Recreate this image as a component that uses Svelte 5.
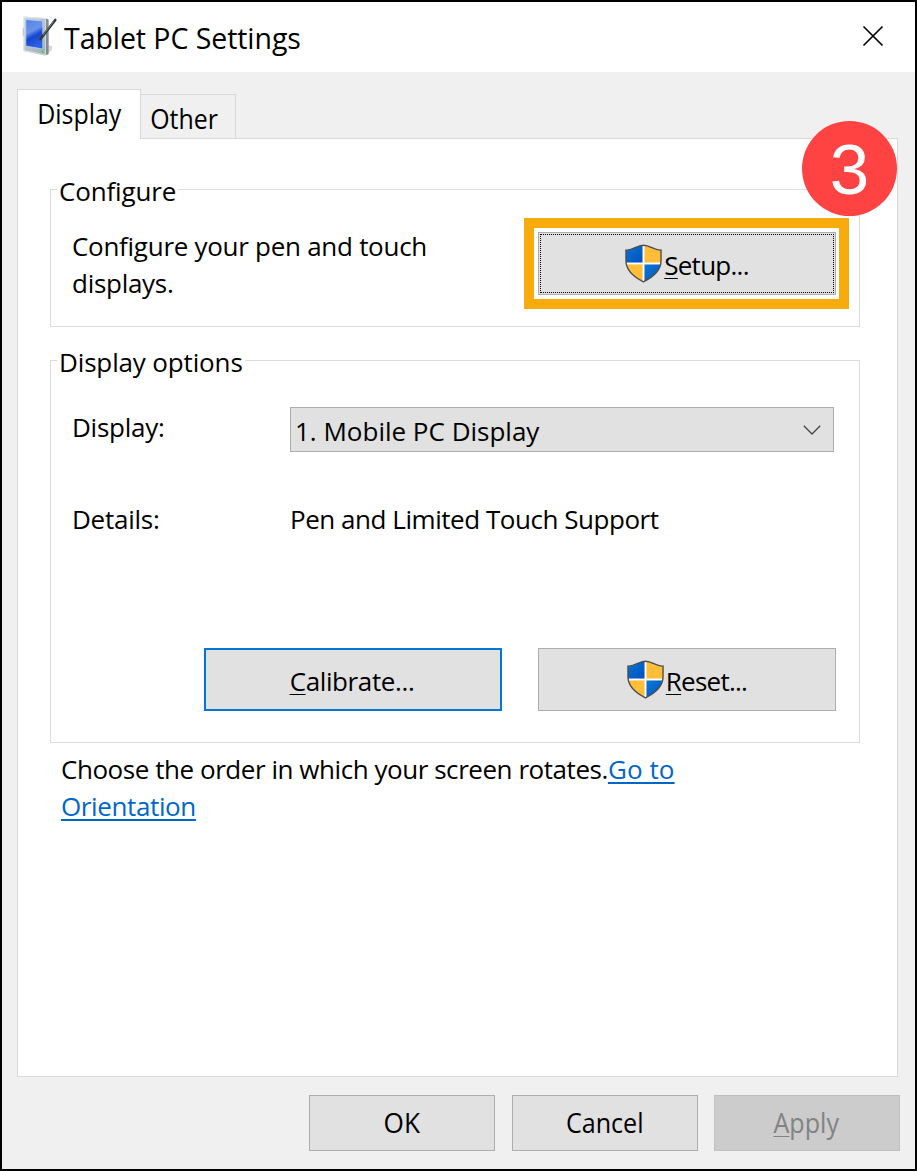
<script lang="ts">
  let activeTab = $state('Display')

  const tabs = ['Display', 'Other']
</script>

{#snippet shield()}
  <svg class="shield" width="37" height="39" viewBox="0 0 38 40">
    <defs>
      <linearGradient id="shield-blue" x1="0" y1="0" x2="1" y2="1">
        <stop offset="0" stop-color="#0a78d6" />
        <stop offset="1" stop-color="#0050bd" />
      </linearGradient>
      <clipPath id="shield-clip">
        <path d="M1 6.2C8 7 12 1.2 19 1.2C26 1.2 30 7 37 6.2V17C37 27 29 34 19 38.8C9 34 1 27 1 17Z" />
      </clipPath>
    </defs>
    <g clip-path="url(#shield-clip)">
      <rect width="38" height="40" fill="#fff" />
      <rect width="18" height="19" fill="url(#shield-blue)" />
      <rect x="20" width="18" height="19" fill="#ffbd38" />
      <rect y="21" width="18" height="19" fill="#ffbd38" />
      <rect x="20" y="21" width="18" height="19" fill="url(#shield-blue)" />
    </g>
    <path
      d="M1 6.2C8 7 12 1.2 19 1.2C26 1.2 30 7 37 6.2V17C37 27 29 34 19 38.8C9 34 1 27 1 17Z"
      fill="none"
      stroke="#4a4d50"
      stroke-width="1.4"
    />
  </svg>
{/snippet}

<div class="window">
  <header class="title-bar">
    <svg class="app-icon" width="38" height="42" viewBox="0 0 38 42">
      <defs>
        <linearGradient id="tablet-screen" x1="0" y1="0" x2="0.3" y2="1">
          <stop offset="0" stop-color="#4f83e6" />
          <stop offset="0.45" stop-color="#6a94ea" />
          <stop offset="0.65" stop-color="#1745cf" />
          <stop offset="1" stop-color="#2a62e0" />
        </linearGradient>
        <linearGradient id="tablet-frame" x1="0" y1="0" x2="1" y2="1">
          <stop offset="0" stop-color="#cfdae0" />
          <stop offset="1" stop-color="#9ba8b2" />
        </linearGradient>
      </defs>
      <path d="M25 39.5L31 35V31L26 30Z" fill="#d8d8d8" />
      <path d="M2.4 13V21" stroke="#9aa5ad" stroke-width="1.2" />
      <path d="M2.5 1.5L23.5 3L27.5 4.5V39L24 40.5L2.5 36Z" fill="url(#tablet-frame)" />
      <path d="M24.8 3.6L27.5 4.5V39L24.8 40Z" fill="#808c96" />
      <path d="M3 2L24.4 3.6V39.8L3 35.5Z" fill="none" stroke="#e3e9ed" stroke-width="0.8" />
      <path d="M4.8 4.5L21.8 6V34L4.8 31Z" fill="url(#tablet-screen)" stroke="#b9cdf0" stroke-width="0.8" />
      <rect x="20.5" y="35.5" width="2.2" height="2" fill="#4be03a" />
      <path d="M19.5 24L34.3 5" stroke="#34373a" stroke-width="2.6" stroke-linecap="round" />
      <path d="M22 20L32.5 6.5" stroke="#8b9094" stroke-width="0.8" />
    </svg>
    <h1>Tablet PC Settings</h1>
    <button class="close" aria-label="Close">
      <svg width="22" height="22" viewBox="0 0 22 22">
        <path d="M1.5 1.5L20.5 20.5M20.5 1.5L1.5 20.5" stroke="#000" stroke-width="1.7" />
      </svg>
    </button>
  </header>

  <div class="tabs">
    {#each tabs as tab}
      <button class="tab" class:active={activeTab === tab} onclick={() => (activeTab = tab)}>
        <span>{tab}</span>
      </button>
    {/each}
  </div>

  <main class="panel">
    <section class="group configure">
      <h2>Configure</h2>
      <div class="setup-row">
        <p>Configure your pen and touch<br />displays.</p>
        <div class="highlight">
          <button class="button focused">
            {@render shield()}
            <span class="label short"><u>S</u>etup...</span>
          </button>
          <div class="step">3</div>
        </div>
      </div>
    </section>

    <section class="group options">
      <h2>Display options</h2>
      <div class="row">
        <span class="name">Display:</span>
        <button class="select">
          <span>1. Mobile PC Display</span>
          <svg width="18" height="10" viewBox="0 0 18 10">
            <path d="M0.8 0.8L9 9L17.2 0.8" fill="none" stroke="#444" stroke-width="1.3" />
          </svg>
        </button>
      </div>
      <div class="row details">
        <span class="name">Details:</span>
        <span class="value">Pen and Limited Touch Support</span>
      </div>
      <div class="actions">
        <button class="button default"><span class="label"><u>C</u>alibrate...</span></button>
        <button class="button">
          {@render shield()}
          <span class="label short"><u>R</u>eset...</span>
        </button>
      </div>
    </section>

    <p class="rotate">
      Choose the order in which your screen rotates.<a href="#orientation"><span>Go to</span><br />Orientation</a>
    </p>
  </main>

  <footer>
    <button class="button"><span class="ok">OK</span></button>
    <button class="button"><span>Cancel</span></button>
    <button class="button" disabled><span><u>A</u>pply</span></button>
  </footer>
</div>

<style>
  :global(body) {
    margin: 0;
  }

  .window {
    box-sizing: border-box;
    width: 917px;
    height: 1171px;
    display: flex;
    flex-direction: column;
    border: 2px solid #000;
    background: #f0f0f0;
    color: #000;
    font: 26px/37px 'Open Sans', 'Noto Sans', sans-serif;
    overflow: hidden;
  }

  button {
    box-sizing: border-box;
    margin: 0;
    padding: 0;
    border: none;
    background: none;
    color: inherit;
    font: inherit;
    letter-spacing: inherit;
  }

  h1,
  h2,
  p {
    margin: 0;
    font-weight: 400;
  }

  svg {
    display: block;
    flex: none;
  }

  span {
    white-space: nowrap;
  }

  u {
    text-underline-offset: 3px;
    text-decoration-thickness: 1px;
    text-decoration-skip-ink: none;
  }

  .title-bar {
    flex: none;
    display: flex;
    align-items: center;
    height: 70px;
    padding: 0 31px 0 19px;
    background: #fff;
  }

  .app-icon {
    margin-bottom: 2px;
  }

  h1 {
    flex: 1;
    padding: 3px 0 0 5px;
    font-size: 28.5px;
    letter-spacing: -0.06px;
  }

  .close {
    margin-bottom: 2px;
  }

  .tabs {
    flex: none;
    display: flex;
    align-items: flex-end;
    height: 50px;
    margin: 17px 0 -1px 15px;
    font-size: 28px;
  }

  .tab {
    width: 95px;
    height: 45px;
    padding: 3px 7px 0 0;
    border: 1px solid #d9d9d9;
    border-left: none;
  }

  .tab.active {
    z-index: 1;
    width: 124px;
    height: 50px;
    padding: 0 0 2px;
    border-left: 1px solid #d9d9d9;
    border-bottom: none;
    background: #fff;
  }

  .tab span {
    display: inline-block;
    transform: scaleX(0.89);
  }

  .panel {
    box-sizing: border-box;
    flex: none;
    width: 881px;
    height: 939px;
    margin-left: 15px;
    padding: 50px 37px 0 32px;
    border: 1px solid #d9d9d9;
    background: #fff;
  }

  .group {
    box-sizing: border-box;
    border: 1px solid #dcdcdc;
  }

  h2 {
    width: fit-content;
    height: 37px;
    margin: -17px 0 0 6px;
    padding: 0 2px;
    background: #fff;
    font-size: 26px;
    letter-spacing: -0.15px;
  }

  .configure {
    height: 138px;
  }

  .setup-row {
    display: flex;
    justify-content: space-between;
    margin: 8px 10px 0 21px;
    letter-spacing: -0.28px;
  }

  .setup-row p {
    padding-top: 10px;
  }

  .highlight {
    position: relative;
    box-sizing: border-box;
    width: 325px;
    height: 91px;
    padding: 4px;
    border: 10px solid #f8ab0c;
  }

  .step {
    position: absolute;
    top: -107px;
    right: -58px;
    width: 95px;
    height: 95px;
    border-radius: 50%;
    background: #ff4343;
    color: #fff;
    font: 71px/98px 'Liberation Sans', sans-serif;
    letter-spacing: 0;
    text-align: center;
  }

  .button {
    display: flex;
    align-items: center;
    justify-content: center;
    width: 298px;
    height: 63px;
    border: 1px solid #adadad;
    background: #e1e1e1;
  }

  .button.default {
    border: 2px solid #0078d7;
  }

  .button.focused {
    outline: 1px dotted #000;
    outline-offset: -3px;
  }

  .label {
    padding: 4px 2px 0 0;
    letter-spacing: -0.38px;
  }

  .label.short {
    padding: 4px 0 0 2px;
    letter-spacing: -0.75px;
  }

  .options {
    height: 383px;
    margin-top: 33px;
  }

  .row {
    display: flex;
    margin: 26px 0 0 21px;
  }

  .name {
    width: 218px;
    padding-top: 2px;
    letter-spacing: -0.25px;
  }

  .select {
    display: flex;
    align-items: center;
    justify-content: space-between;
    width: 544px;
    height: 45px;
    padding: 3px 12px 0 4px;
    border: 1px solid #adadad;
    background: #e1e1e1;
  }

  .select svg {
    margin-bottom: 3px;
  }

  .details {
    margin-top: 47px;
  }

  .value {
    padding-top: 2px;
    letter-spacing: -0.46px;
  }

  .actions {
    display: flex;
    gap: 36px;
    margin: 110px 0 0 153px;
  }

  .rotate {
    padding: 8px 0 0 11px;
    letter-spacing: -0.45px;
  }

  .rotate a {
    letter-spacing: -0.38px;
  }

  .rotate span {
    letter-spacing: 0.1px;
  }

  a {
    color: #0066cc;
    text-decoration-thickness: 2px;
    text-underline-offset: 3px;
    text-decoration-skip-ink: none;
  }

  footer {
    display: flex;
    gap: 17px;
    padding: 18px 0 0 307px;
    font-size: 27px;
  }

  footer .button {
    width: 186px;
    height: 56px;
    padding: 0 1px 2px 0;
  }

  footer .button:disabled {
    margin-left: -1px;
    border-color: #bfbfbf;
    background: #ccc;
    color: #838383;
  }

  footer span {
    transform: scaleX(0.93);
  }

  footer .ok {
    transform: scaleX(0.97);
  }
</style>
